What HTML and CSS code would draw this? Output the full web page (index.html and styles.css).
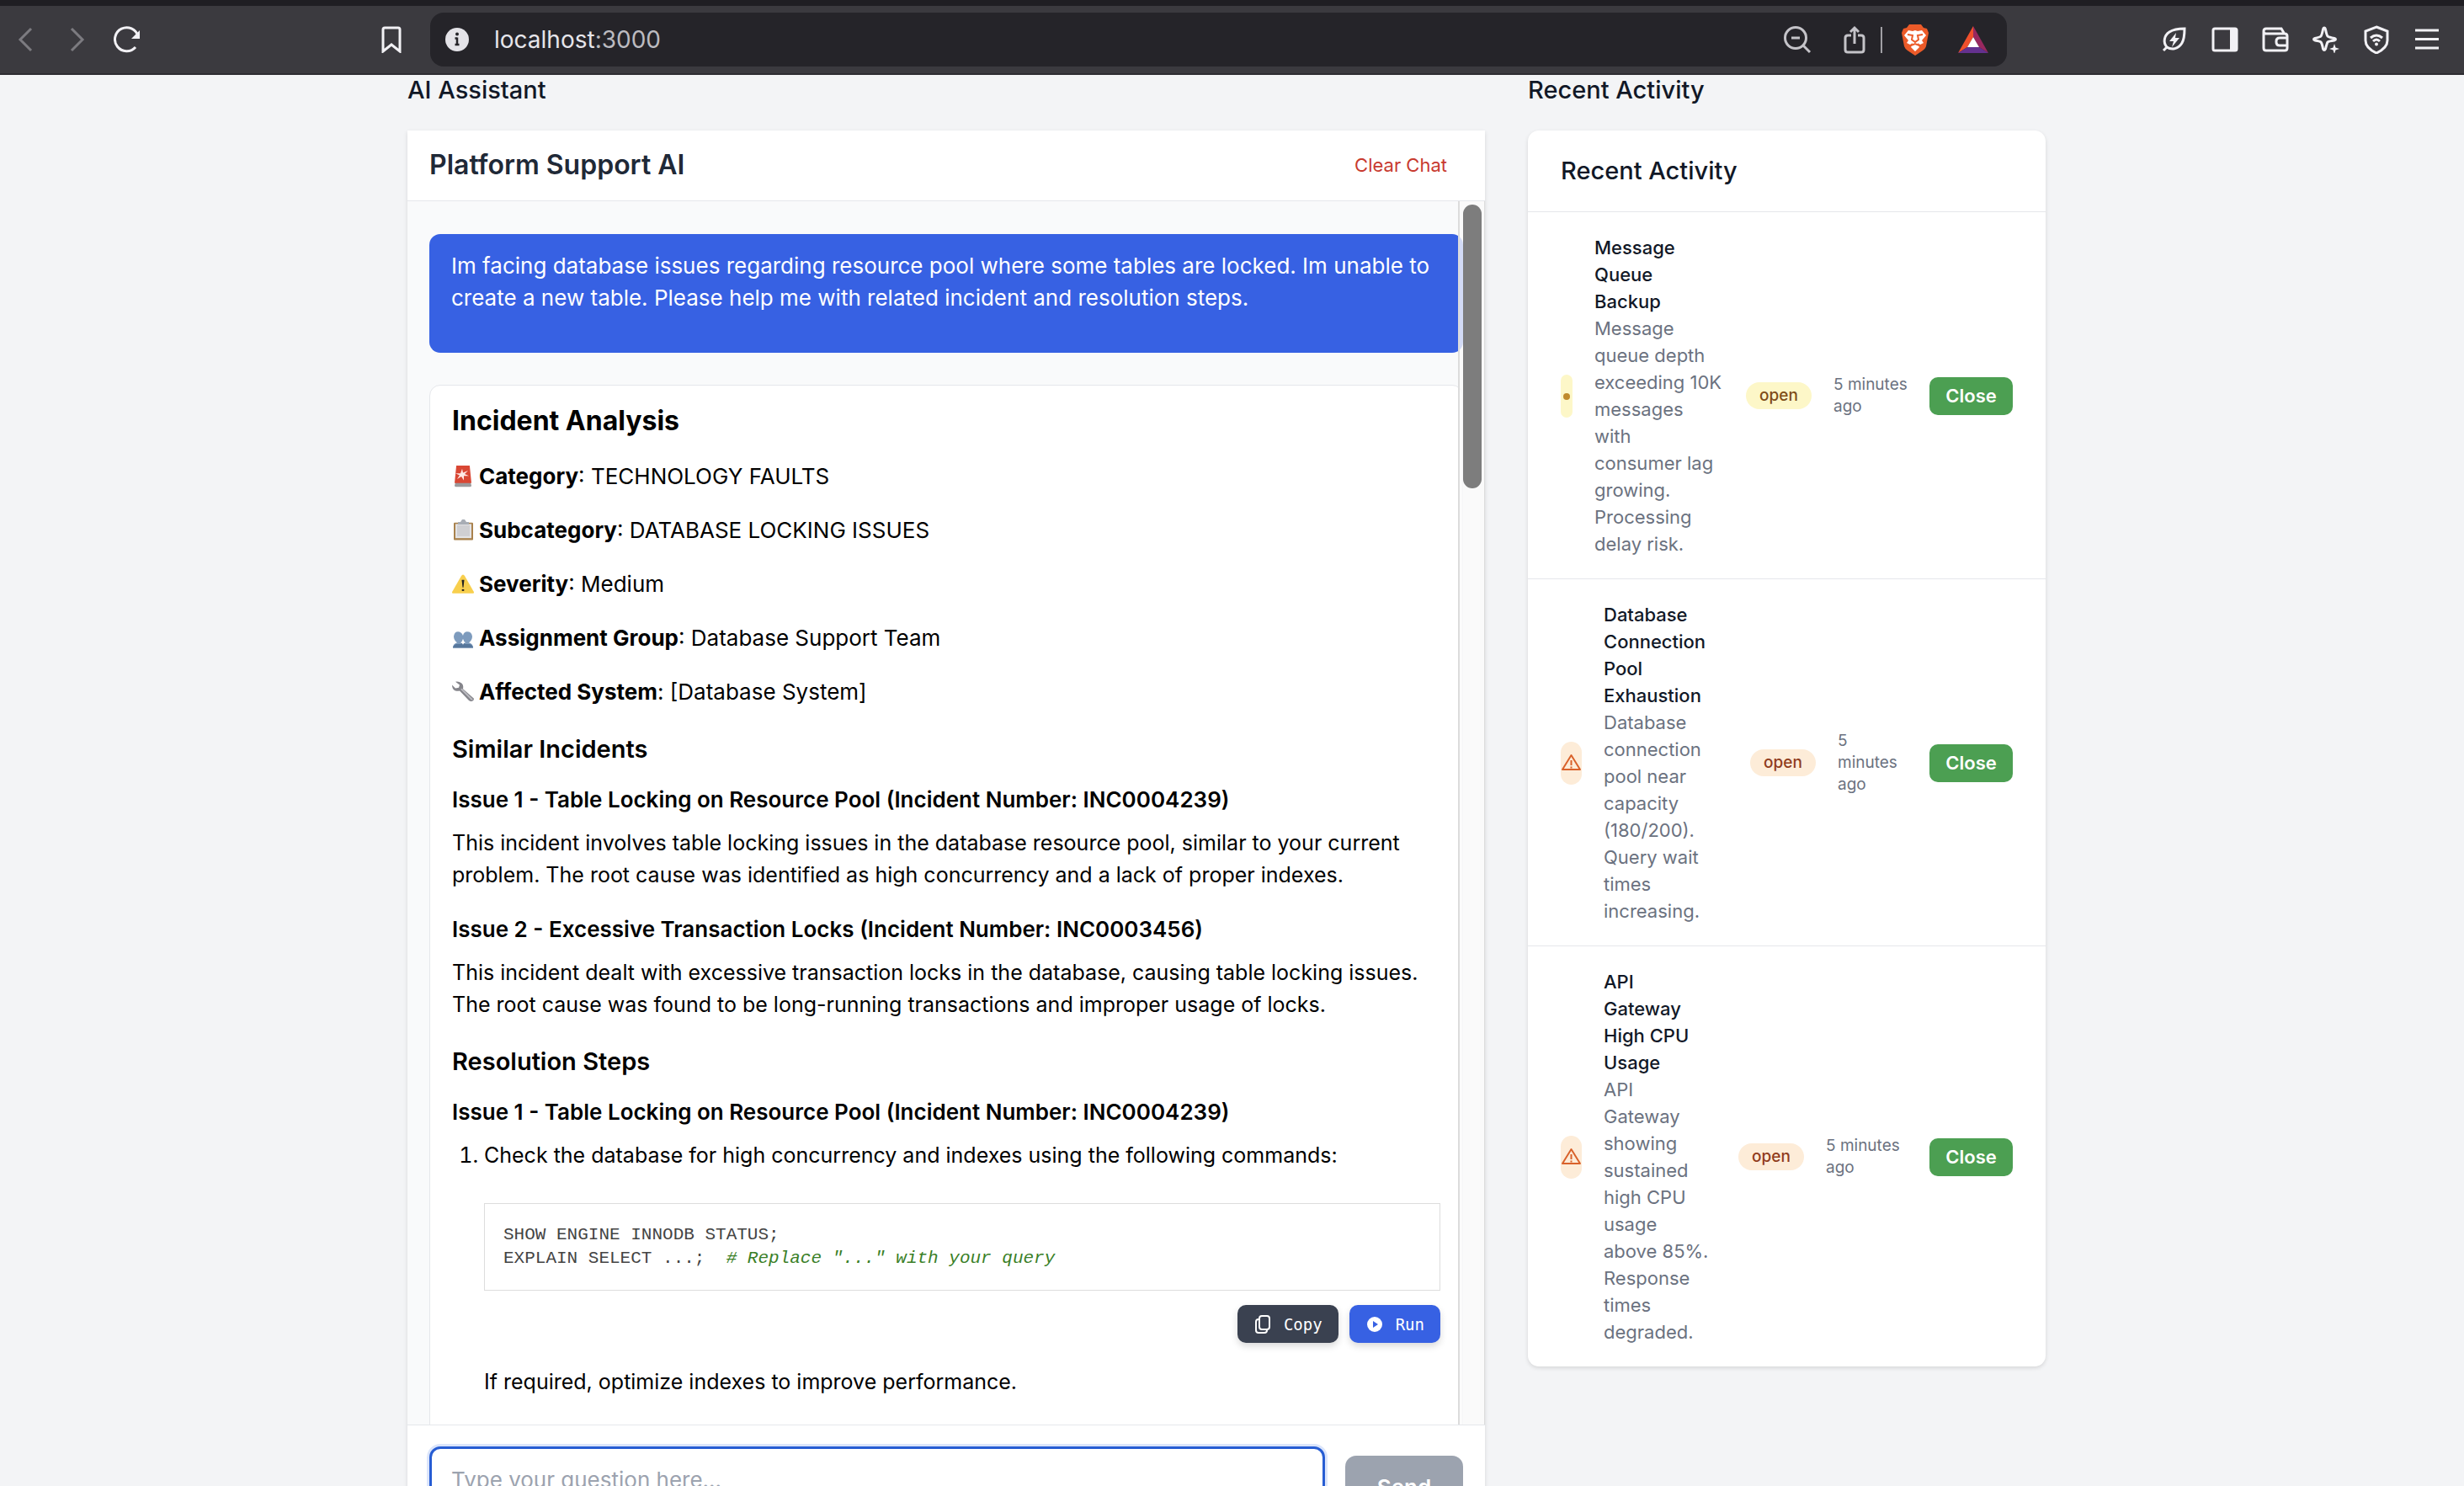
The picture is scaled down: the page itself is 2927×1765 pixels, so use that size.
FILE: index.html
```html
<!DOCTYPE html>
<html lang="en">
<head>
<meta charset="utf-8">
<title>Platform Support AI</title>
<link rel="stylesheet" href="styles.css">
</head>
<body>
<header class="browser">
  <nav class="nav" aria-label="Browser navigation">
    <button class="tool dim" aria-label="Back"><svg width="32" height="32" viewBox="0 0 32 32"><path d="M22 3 9 16 22 29"/></svg></button>
    <button class="tool dim" aria-label="Forward"><svg width="32" height="32" viewBox="0 0 32 32"><path d="M10 3 23 16 10 29"/></svg></button>
    <button class="tool" aria-label="Reload"><svg width="32" height="32" viewBox="0 0 32 32"><path class="thick" d="M29 12A14 14 0 1 0 26 25"/><path class="fill" d="M31 5v10H21z"/></svg></button>
  </nav>
  <button class="tool" aria-label="Bookmark"><svg width="32" height="32" viewBox="0 0 32 32"><path class="thick" d="M6 4q0-2 2-2h16q2 0 2 2v26l-10-8-10 8z"/></svg></button>
  <div class="omnibox">
    <svg class="info" width="28" height="28" viewBox="0 0 28 28"><circle cx="14" cy="14" r="14" fill="#e4e3e8"/><circle cx="14" cy="7.500" r="2" fill="#252429"/><path d="M14 11.500V20M11.500 12.500H14M11.500 20h5" stroke="#252429" stroke-width="2.500" fill="none"/></svg>
    <span class="url">localhost<span class="port">:3000</span></span>
    <span class="omni-tools">
      <button class="tool soft" aria-label="Zoom out"><svg width="34" height="34" viewBox="0 0 34 34"><circle cx="15" cy="15" r="12.500"/><path d="m24 24 8 8M10 15h10"/></svg></button>
      <button class="tool soft" aria-label="Share"><svg width="34" height="34" viewBox="0 0 34 34"><path d="M13 12H9q-3 0-3 3v14q0 3 3 3h16q3 0 3-3V15q0-3-3-3h-4M17 22V3M12 8l5-5 5 5"/></svg></button>
      <span class="bar"></span>
      <button class="tool" aria-label="Brave Shields"><svg width="34" height="38" viewBox="0 0 34 38"><path class="plain" fill="#ec5b29" d="M10 1h14l3 4 4 1 2 5-3 16q-1 3-4 5l-9 6-9-6q-3-2-4-5L1 11l2-5 4-1z"/><path class="plain" fill="#fff" d="M9 8l5 1 3-1 3 1 5-1 5 6-5 6 2 3-4 2-3-2 1 3 1 2-5 5-5-5 1-2 1-3-3 2-4-2 2-3-5-6z"/><path class="mane" d="M8 13l6 1-1 5 4 3 4-3-1-5 6-1M12 26l5-2 5 2"/></svg></button>
      <button class="tool" aria-label="Rewards"><svg width="36" height="34" viewBox="0 0 36 34"><path class="plain" fill="#f0502c" d="M18 1 0 33l11-7 7-12z"/><path class="plain" fill="#98285f" d="M18 1v13l7 12 11 7z"/><path class="plain" fill="#64318f" d="M0 33h36l-11-7H11z"/><path class="plain" fill="#fff" d="m18 14 7 12H11z"/></svg></button>
    </span>
  </div>
  <nav class="exts" aria-label="Browser tools">
    <button class="tool" aria-label="Energy saver"><svg width="32" height="32" viewBox="0 0 32 32"><path class="thick" d="M7 25C2 19 4 11 10 7q6-4 18-4 0 12-3 17c-4 7-12 9-18 5zM7 25l-4 4"/><path class="fill" d="M18 8l-8 10h5l-2 7 9-11h-5z"/></svg></button>
    <button class="tool" aria-label="Side panel"><svg width="32" height="32" viewBox="0 0 32 32"><rect class="thick" x="2" y="3" width="28" height="26" rx="2"/><path class="fill" d="M22 3h8v26h-8z"/></svg></button>
    <button class="tool" aria-label="Wallet"><svg width="32" height="32" viewBox="0 0 32 32"><path class="thick" d="M2 6q0-3 3-3h18l3 5M2 6q0 3 3 3h22q3 0 3 3v14q0 3-3 3H5q-3 0-3-3zM30 14h-9q-4 0-4 4v1q0 4 4 4h9"/></svg></button>
    <button class="tool" aria-label="Assistant"><svg width="32" height="32" viewBox="0 0 32 32"><path class="thick" d="M14 2q1 0 1.500 2Q17 11 18 12q1 1 8 2.500 3 1 0 2.500-7 1-8 2-1 2-2.500 8-1.500 3-3 0-1-6-2.500-8-1-1-7-2-3-1.500 0-2.500 6-1.500 7-2.500 1-1 2.500-8Q13 2 14 2z"/><path class="fill" d="m26 21 1.500 4.500L32 27l-4.500 1.500L26 33l-1.500-4.500L20 27l4.500-1.500z"/></svg></button>
    <button class="tool" aria-label="VPN"><svg width="32" height="34" viewBox="0 0 32 34"><path class="thick" d="M16 2 29 7v11q0 9-13 15Q3 27 3 18V7zM9 15q7-6 14 0M12 19q4-4 8 0"/><circle class="fill" cx="16" cy="22.500" r="2"/></svg></button>
    <button class="tool" aria-label="Menu"><svg width="32" height="32" viewBox="0 0 32 32"><path class="thick" d="M2 5h28M2 15.500h28M2 26h28"/></svg></button>
  </nav>
</header>

<main class="page">
  <div class="columns">
    <section class="column">
      <h2 class="section-title">AI Assistant</h2>
      <div class="chat">
        <div class="chat-head">
          <h3 class="chat-title">Platform Support AI</h3>
          <button class="clear">Clear Chat</button>
        </div>
        <div class="messages">
          <div class="bubble">Im facing database issues regarding resource pool where some tables are locked. Im unable to create a new table. Please help me with related incident and resolution steps.</div>
          <article class="answer">
            <h2>Incident Analysis</h2>
            <p class="fact"><svg width="26" height="26" viewBox="0 2 26 34" preserveAspectRatio="none"><path d="M4 28h18l1 5q0 2-3 2H6q-3 0-3-2z" fill="#9b9a9c"/><path d="M5 3q0-2 3-2h10q3 0 3 2l2 26H3z" fill="#d94734"/><path d="m12 7 1 6 6-3-4 5 5 3-6 0 0 7-3-6-5 4 3-6-5-3 6 0z" fill="#ffe9e6"/></svg><span><strong>Category</strong>: TECHNOLOGY FAULTS</span></p>
            <p class="fact"><svg width="26" height="26" viewBox="0 2 26 34" preserveAspectRatio="none"><rect x="2" y="7" width="23" height="27" rx="1" fill="#a9824d"/><path d="M4 9h19v22H4z" fill="#e3e3e5"/><path d="M6 11h15v17H6z" fill="#cfcfd2"/><path d="M7 6h3l2-4h3l2 4h3v4H7z" fill="#a8adb5"/></svg><span><strong>Subcategory</strong>: DATABASE LOCKING ISSUES</span></p>
            <p class="fact"><svg width="26" height="26" viewBox="0 2 26 34" preserveAspectRatio="none"><path d="M13 4q1 0 2 2l11 25q0 2-1 2H1q-1 0-1-2L11 6q1-2 2-2z" fill="#f8cf4d"/><path d="M11.500 12h3l-1 12h-1z" fill="#222"/><circle cx="13" cy="28" r="1.500" fill="#222"/></svg><span><strong>Severity</strong>: Medium</span></p>
            <p class="fact"><svg width="26" height="26" viewBox="0 2 26 34" preserveAspectRatio="none"><path d="M1 34q0-6 5-8-4-4-4-10 1-7 5-7t6 6q1-6 5-6 5 0 6 7 0 6-4 10 5 2 5 8z" fill="#7d9bbd"/><path d="M1 34q0-4 4-6h5l3-3 3 3h5q4 2 4 6z" fill="#56779c"/><path d="M13 20q-1 5-3 6 3 1 3 4 0-3 3-4-2-1-3-6z" fill="#fff"/></svg><span><strong>Assignment Group</strong>: Database Support Team</span></p>
            <p class="fact"><svg width="26" height="26" viewBox="0 2 26 34" preserveAspectRatio="none"><path d="m4 3 5 5-1 4-4 1-4-5q0 7 4 9 3 1 5 0l11 15q2 2 4 1t2-4L13 14q1-6-2-9-3-3-7-2z" fill="#85858b"/><path d="m11 14 13 17" stroke="#bcbcc2" stroke-width="2"/></svg><span><strong>Affected System</strong>: [Database System]</span></p>
            <h3>Similar Incidents</h3>
            <h4>Issue 1 - Table Locking on Resource Pool (Incident Number: INC0004239)</h4>
            <p class="prose">This incident involves table locking issues in the database resource pool, similar to your current problem. The root cause was identified as high concurrency and a lack of proper indexes.</p>
            <h4 class="next">Issue 2 - Excessive Transaction Locks (Incident Number: INC0003456)</h4>
            <p class="prose">This incident dealt with excessive transaction locks in the database, causing table locking issues. The root cause was found to be long-running transactions and improper usage of locks.</p>
            <h3>Resolution Steps</h3>
            <h4>Issue 1 - Table Locking on Resource Pool (Incident Number: INC0004239)</h4>
            <ol class="prose">
              <li>Check the database for high concurrency and indexes using the following commands:
<pre class="code">SHOW ENGINE INNODB STATUS;
EXPLAIN SELECT ...;  <em># Replace "..." with your query</em></pre>
                <div class="code-actions">
                  <button class="action copy"><svg width="18" height="22" viewBox="0 0 18 22"><rect x="5" y="1" width="12" height="16" rx="3"/><path d="M4 5q-3 0-3 3v10q0 3 3 3h7q3 0 3-3"/></svg>Copy</button>
                  <button class="action run"><svg width="18" height="22" viewBox="0 0 18 22"><circle cx="9" cy="11" r="9" fill="#fff" stroke="none"/><path d="m7 7 6 4-6 4z" fill="#3761e3" stroke="none"/></svg>Run</button>
                </div>
                <p class="note">If required, optimize indexes to improve performance.</p>
              </li>
            </ol>
          </article>
          <div class="rail"><div class="thumb"></div></div>
        </div>
        <form class="composer">
          <textarea class="question" aria-label="Your question" placeholder="Type your question here..."></textarea>
          <button class="send" type="button">Send</button>
        </form>
      </div>
    </section>

    <section class="column">
      <h2 class="section-title">Recent Activity</h2>
      <div class="activity">
        <h3 class="activity-title">Recent Activity</h3>
        <ul class="events">
          <li class="event queue">
            <span class="mark"><svg width="14" height="14" viewBox="0 0 14 14"><circle cx="7" cy="8" r="4" fill="#c08a2c"/></svg></span>
            <div class="event-text"><h4>Message Queue<br>Backup</h4><p>Message queue depth exceeding 10K messages with<br>consumer lag growing. Processing delay risk.</p></div>
            <span class="badge">open</span>
            <span class="time">5 minutes ago</span>
            <button class="close">Close</button>
          </li>
          <li class="event pool">
            <span class="mark"><svg width="25" height="22" viewBox="0 0 25 22"><path d="M12.500 2 23 19H2zM12.500 8v6M12.500 15.500v2" fill="none" stroke="#d9622b" stroke-width="2" stroke-linejoin="round"/></svg></span>
            <div class="event-text"><h4>Database Connection Pool Exhaustion</h4><p>Database connection pool near capacity (180/200). Query wait times increasing.</p></div>
            <span class="badge">open</span>
            <span class="time">5 minutes ago</span>
            <button class="close">Close</button>
          </li>
          <li class="event gateway">
            <span class="mark"><svg width="25" height="22" viewBox="0 0 25 22"><path d="M12.500 2 23 19H2zM12.500 8v6M12.500 15.500v2" fill="none" stroke="#d9622b" stroke-width="2" stroke-linejoin="round"/></svg></span>
            <div class="event-text"><h4>API<br>Gateway High CPU Usage</h4><p>API<br>Gateway showing sustained high CPU usage<br>above 85%. Response times degraded.</p></div>
            <span class="badge">open</span>
            <span class="time">5 minutes ago</span>
            <button class="close">Close</button>
          </li>
        </ul>
      </div>
    </section>
  </div>
</main>
</body>
</html>
```
FILE: styles.css
```css
* { box-sizing: border-box; margin: 0; padding: 0; }

body {
  height: 100vh;
  overflow: hidden;
  background: #f3f4f6;
  color: #000;
  font: 26px/38px Inter, "Liberation Sans", sans-serif;
}

button { border: 0; background: none; font: inherit; color: inherit; cursor: pointer; }

/* Browser toolbar */
.browser {
  display: flex;
  align-items: center;
  height: 89px;
  padding: 0 28px 0 15px;
  background: #3b3a3f;
  border-top: 7px solid #1f1e23;
  border-bottom: 2px solid #2e2d32;
}
.nav { display: flex; gap: 28px; flex: 1 1 0; max-width: 434px; }
.tool { display: flex; flex: none; }
.tool svg { fill: none; stroke: #f2f1f5; stroke-width: 3; }
.tool .thick { stroke-width: 3; }
.tool .fill { fill: #f2f1f5; stroke: none; }
.tool .plain { stroke: none; }
.tool .mane { stroke: #ec5b29; stroke-width: 2; }
.dim svg { stroke: #7c7b80; }
.soft svg { stroke: #c4c3c8; }
.omnibox {
  display: flex;
  align-items: center;
  flex: 1;
  height: 64px;
  margin: 0 183px 0 30px;
  padding: 0 22px 0 18px;
  border-radius: 16px;
  background: #252429;
}
.url { margin-left: 30px; font-size: 28px; color: #e6e5ea; }
.port { color: #bcbbc0; }
.omni-tools { display: flex; align-items: center; gap: 22px; margin-left: auto; }
.omni-tools .tool:nth-child(1) { margin-right: 12px; }
.omni-tools .tool:nth-child(2) { margin-right: -8px; }
.omni-tools .tool:last-child { margin-left: 12px; }
.bar { width: 2px; height: 31px; background: #a09fa4; }
.exts { display: flex; align-items: center; gap: 28px; }

/* Page grid */
.page { padding: 0 64px 0 51px; }
.columns {
  display: grid;
  grid-template-columns: minmax(0, 1280fr) minmax(0, 615fr);
  gap: 51px;
  align-items: start;
  max-width: 1946px;
  margin: 0 auto;
}
.section-title { margin-bottom: 30px; font-size: 29px; line-height: 36px; font-weight: 500; color: #111827; }

/* Chat */
.chat { background: #fff; box-shadow: 0 2px 5px rgba(0, 0, 0, .12); }
.chat-head {
  display: flex;
  align-items: center;
  justify-content: space-between;
  height: 84px;
  padding: 0 45px 2px 26px;
  border-bottom: 1px solid #e5e7eb;
}
.chat-title { font-size: 32px; font-weight: 600; color: #1f2937; }
.clear { font-size: 22px; color: #c83a2f; }
.messages {
  position: relative;
  display: flex;
  flex-direction: column;
  gap: 38px;
  height: calc(100vh - 312px);
  padding: 39px 26px 0;
  overflow: hidden;
  background: #f9fafb;
}
.bubble {
  flex: none;
  padding: 19px 26px 46px;
  border-radius: 13px;
  background: #3761e3;
  color: #fff;
}
.answer { flex: none; padding: 19px 26px 60px; border: 1px solid #e5e7eb; border-radius: 13px; background: #fff; }
.answer h2 { font-size: 32px; line-height: 45px; font-weight: 700; margin-bottom: 25px; }
.answer h3 { font-size: 29px; line-height: 45px; font-weight: 600; margin: 26px 0 19px; }
.answer h4 { font-size: 26px; font-weight: 600; margin-bottom: 13px; }
.answer .next { margin-top: 27px; }
.prose { font-size: 25px; }
.fact { display: flex; align-items: center; gap: 6px; margin-bottom: 26px; }
.fact strong { font-weight: 700; }
.answer ol { padding-left: 38px; }
.code {
  margin: 38px 0 17px;
  padding: 23px 22px;
  border: 1px solid #ddd;
  font: 21px/28px "Liberation Mono", monospace;
  color: #444;
}
.code em { color: #3a7f27; }
.code-actions { display: flex; justify-content: flex-end; gap: 13px; }
.action {
  display: flex;
  align-items: center;
  gap: 16px;
  height: 45px;
  padding: 0 19px 0 21px;
  border-radius: 10px;
  color: #fff;
  font: 19px/26px "DejaVu Sans Mono", monospace;
  box-shadow: 0 4px 8px rgba(0, 0, 0, .15);
}
.action svg { fill: none; stroke: #fff; stroke-width: 2; }
.copy { background: #3a4150; }
.run { background: #3761e3; }
.note { margin-top: 27px; }
.rail {
  position: absolute;
  top: 0;
  right: 0;
  bottom: 0;
  width: 32px;
  padding: 4px;
  border: solid #dcdcdc;
  border-width: 0 1px 0 2px;
  background: rgba(250, 250, 250, .8);
}
.thumb { width: 22px; height: 337px; border-radius: 11px; background: #7d7d7d; }
.composer {
  display: flex;
  align-items: center;
  gap: 24px;
  padding: 25px 26px;
  border-top: 1px solid #e5e7eb;
}
.question {
  flex: 1;
  height: 97px;
  padding: 18px 23px;
  border: 3px solid #275dd3;
  border-radius: 13px;
  outline: 0;
  box-shadow: 0 0 0 3px #dbe5fb;
  background: #fff;
  font: inherit;
  resize: none;
}
.question::placeholder { color: #9ca3af; }
.send { width: 140px; height: 75px; border-radius: 13px; background: #9ca3af; color: #fff; font-weight: 600; }

/* Recent activity */
.activity { border-radius: 13px; background: #fff; box-shadow: 0 2px 5px rgba(0, 0, 0, .12); }
.activity-title { padding: 25px 39px 26px; font-size: 29px; line-height: 45px; font-weight: 500; color: #111827; }
.events { list-style: none; }
.event {
  display: grid;
  gap: 26px;
  align-items: center;
  padding: 26px 39px 25px;
  border-top: 1px solid #e5e7eb;
  font-size: 22px;
  line-height: 32px;
}
.queue { grid-template-columns: 14px 154px 78px 1fr 99px; }
.pool { grid-template-columns: 25px 148px 78px 1fr 99px; }
.gateway { grid-template-columns: 25px 134px 78px 1fr 99px; }
.mark {
  display: flex;
  align-items: center;
  justify-content: center;
  height: 51px;
  border-radius: 13px;
  background: #fdecd8;
}
.queue .mark { border-radius: 7px; background: #fdf7c8; }
.event h4 { font-size: 22px; font-weight: 500; color: #111827; }
.event p { color: #6b7280; }
.badge {
  border-radius: 16px;
  background: #fdecd8;
  color: #903c1d;
  font-size: 19px;
  font-weight: 500;
  text-align: center;
}
.queue .badge { background: #fdf7c8; color: #7e4d18; }
.time { font-size: 19px; line-height: 26px; color: #6b7280; }
.close { height: 45px; border-radius: 10px; background: #4c9f52; color: #fff; font-weight: 600; }
```
